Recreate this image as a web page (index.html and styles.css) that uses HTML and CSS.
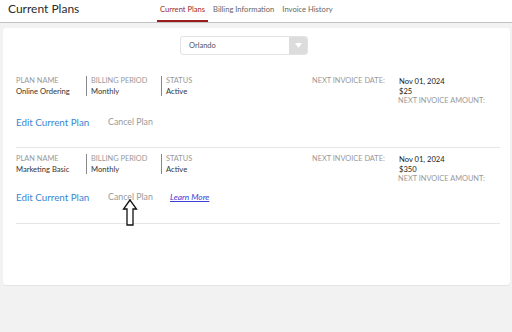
FILE: index.html
```html
<!DOCTYPE html>
<html>
<head>
<meta charset="utf-8">
<link rel="stylesheet" href="styles.css">
</head>
<body>
<header class="topbar">
  <h1 class="title">Current Plans</h1>
  <nav class="tabs">
    <a class="tab active">Current Plans</a>
    <a class="tab">Billing Information</a>
    <a class="tab">Invoice History</a>
  </nav>
</header>
<main class="page">
  <section class="card">
    <div class="select">
      <span class="select-text">Orlando</span>
      <span class="select-btn"><svg width="7" height="5" viewBox="0 0 7 5"><path d="M0 0H7L3.5 5Z" fill="#fff"/></svg></span>
    </div>

    <div class="plan plan-one">
      <div class="fields">
        <div class="field first"><div class="lbl">PLAN NAME</div><div class="val">Online Ordering</div></div>
        <div class="field"><div class="lbl">BILLING PERIOD</div><div class="val">Monthly</div></div>
        <div class="field"><div class="lbl">STATUS</div><div class="val">Active</div></div>
        <div class="inv-lbl">NEXT INVOICE DATE:</div>
        <div class="inv">
          <div class="inv-val">Nov 01, 2024</div>
          <div class="inv-val">$25</div>
          <div class="inv-lbl2">NEXT INVOICE AMOUNT:</div>
        </div>
      </div>
      <div class="links">
        <a class="edit">Edit Current Plan</a>
        <a class="cancel">Cancel Plan</a>
      </div>
    </div>

    <div class="plan plan-two">
      <div class="fields">
        <div class="field first"><div class="lbl">PLAN NAME</div><div class="val">Marketing Basic</div></div>
        <div class="field"><div class="lbl">BILLING PERIOD</div><div class="val">Monthly</div></div>
        <div class="field"><div class="lbl">STATUS</div><div class="val">Active</div></div>
        <div class="inv-lbl">NEXT INVOICE DATE:</div>
        <div class="inv">
          <div class="inv-val">Nov 01, 2024</div>
          <div class="inv-val">$350</div>
          <div class="inv-lbl2">NEXT INVOICE AMOUNT:</div>
        </div>
      </div>
      <div class="links">
        <a class="edit">Edit Current Plan</a>
        <a class="cancel">Cancel Plan</a>
        <a class="learn">Learn More</a>
        <svg class="arrow" width="16" height="27" viewBox="0 0 16 27"><path d="M8 1L1.5 10H5V26H11V10H14.5Z" fill="#fff" stroke="#111" stroke-width="1.3" stroke-linejoin="miter"/></svg>
      </div>
    </div>
  </section>
</main>
</body>
</html>
```
FILE: styles.css
```css
* { box-sizing: border-box; margin: 0; padding: 0; }
html, body { width: 512px; height: 332px; overflow: hidden; }
body {
  font-family: "Lato", "Liberation Sans", sans-serif;
  background: #f2f2f2;
  color: #333;
}
.topbar {
  height: 23px;
  background: #fff;
  border-bottom: 1px solid #c4c4c4;
  display: flex;
  align-items: stretch;
}
.title {
  font-weight: 400;
  font-size: 12px;
  color: #2b2b2b;
  padding: 1px 0 0 8px;
  width: 157px;
  line-height: 15px;
}
.tabs { display: flex; align-items: stretch; }
.tab {
  font-size: 7.6px;
  color: #666;
  padding: 4px 3px 0 3px;
  margin-right: 2px;
  border-bottom: 2px solid transparent;
}
.tab.active { color: #9a2a2a; border-bottom-color: #9a1c1c; }
.page { padding: 5px 2px 0 3px; }
.card {
  background: #fff;
  border-radius: 3px;
  height: 257px;
  box-shadow: 0 1px 1px rgba(0,0,0,0.06);
  padding: 8px 10px 0 13px;
}
.select {
  margin-left: 164px;
  width: 128px;
  height: 19px;
  border: 1px solid #e3e3e3;
  border-radius: 3px;
  display: flex;
  overflow: hidden;
}
.select-text {
  flex: 1;
  font-size: 7.5px;
  color: #555;
  padding: 4px 0 0 8px;
}
.select-btn {
  width: 18px;
  background: #dcdcdc;
  display: flex;
  align-items: center;
  justify-content: center;
}
.plan { border-bottom: 1px solid #e6e6e6; }
.fields {
  display: grid;
  grid-template-columns: 70px 75px 151px 87px auto;
}
.plan-one .fields { padding-top: 21px; }
.plan-two .fields { padding-top: 6px; }
.field { border-left: 1px solid #888; padding-left: 4px; height: 20px; }
.field.first { border-left: none; padding-left: 0; }
.lbl { font-size: 7.4px; color: #999; line-height: 10px; }
.val { font-size: 7.6px; color: #333; line-height: 10px; }
.inv-lbl { font-size: 7.4px; color: #999; line-height: 10px; }
.inv-val { font-size: 7.6px; color: #222; line-height: 10px; }
.inv-lbl2 { font-size: 7.4px; color: #999; line-height: 9px; margin-left: -1px; }
.links {
  position: relative;
  display: flex;
  align-items: center;
  height: 21px;
  margin-bottom: 15px;
}
.plan-one .links { margin-top: 6px; }
.plan-two .links { margin-top: 3px; margin-bottom: 16px; }
.edit { font-size: 9.8px; color: #3a86d0; width: 92px; }
.cancel { font-size: 8.8px; color: #999; width: 62px; }
.learn { font-size: 8.4px; color: #3c3cd6; font-style: italic; text-decoration: underline; }
.arrow { position: absolute; left: 106px; top: 13px; }
```
